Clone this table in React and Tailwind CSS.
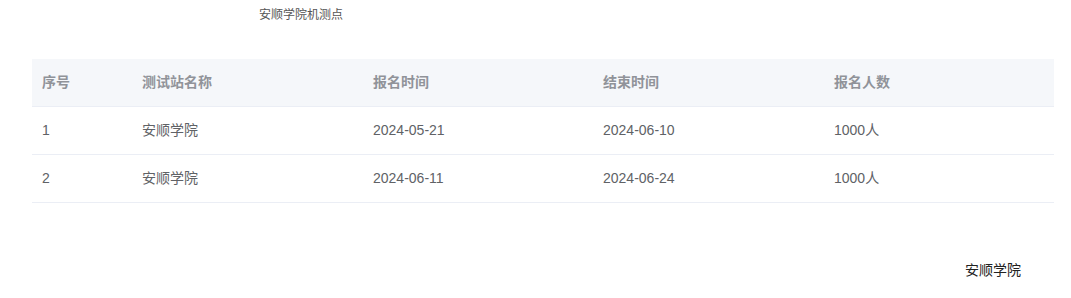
const rows = [
  { id: 1, name: '安顺学院', start: '2024-05-21', end: '2024-06-10', count: '1000人' },
  { id: 2, name: '安顺学院', start: '2024-06-11', end: '2024-06-24', count: '1000人' },
]

const cols = ['w-[100px]', 'w-[231px]', 'w-[230px]', 'w-[231px]', 'w-[230px]']

export default function App() {
  return (
    <div className="min-h-[298px] bg-white font-['Liberation_Sans','Noto_Sans_CJK_SC',sans-serif]">
      <div className="pl-[259px] pt-[7px] text-[12px] leading-4 text-[#555]">安顺学院机测点</div>

      <div className="mt-[36px] ml-[32px] mr-[17px]">
        <div className="flex h-[48px] items-center border-b border-[#ebeef5] bg-[#f5f7fa] text-[14px] font-bold text-[#909399]">
          {['序号', '测试站名称', '报名时间', '结束时间', '报名人数'].map((h, i) => (
            <div key={h} className={`${cols[i]} pl-[10px]`}>{h}</div>
          ))}
        </div>
        {rows.map((r) => (
          <div key={r.id} className="flex h-[48px] items-center border-b border-[#ebeef5] text-[14px] text-[#606266]">
            {[r.id, r.name, r.start, r.end, r.count].map((v, i) => (
              <div key={i} className={`${cols[i]} pl-[10px]`}>{v}</div>
            ))}
          </div>
        ))}
      </div>

      <div className="mt-[57px] flex justify-end pr-[50px] text-[14px] leading-5 text-[#222]">安顺学院</div>
    </div>
  )
}
